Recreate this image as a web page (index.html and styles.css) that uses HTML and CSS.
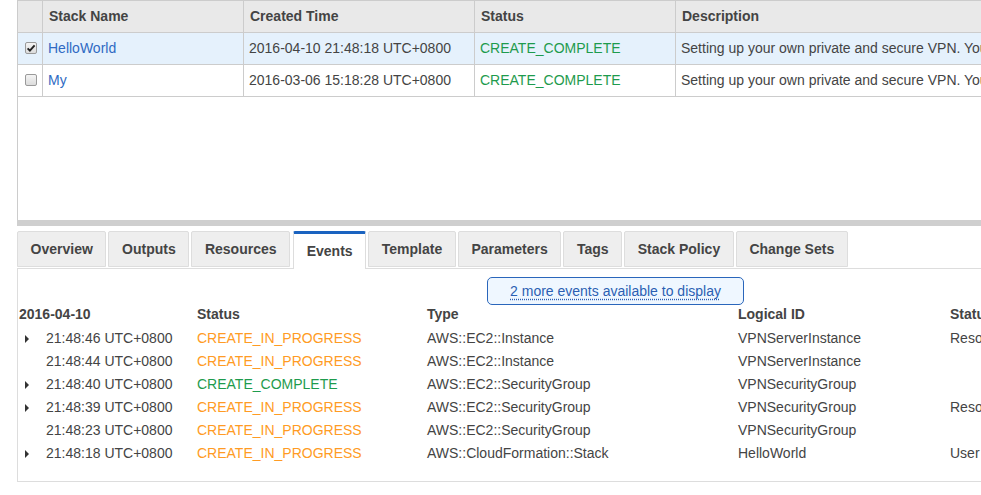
FILE: index.html
```html
<!DOCTYPE html>
<html lang="en">
<head>
<meta charset="utf-8">
<title>CloudFormation Stacks</title>
<link rel="stylesheet" href="styles.css">
</head>
<body>
<div class="page">
  <div class="top-pane">
    <table class="stacks">
      <thead>
        <tr>
          <th class="c-sel"></th>
          <th class="c-name">Stack Name</th>
          <th class="c-time">Created Time</th>
          <th class="c-status">Status</th>
          <th class="c-desc">Description</th>
        </tr>
      </thead>
      <tbody>
        <tr class="selected">
          <td class="c-sel"><span class="cb checked"><svg viewBox="0 0 12 12" width="12" height="12"><path d="M2.6 6.3 L4.9 8.6 L9.6 3.3" fill="none" stroke="#222" stroke-width="1.9"/></svg></span></td>
          <td><a class="link" href="#">HelloWorld</a></td>
          <td>2016-04-10 21:48:18 UTC+0800</td>
          <td class="ok">CREATE_COMPLETE</td>
          <td>Setting up your own private and secure VPN. You can use it to access the internet securely.</td>
        </tr>
        <tr>
          <td class="c-sel"><span class="cb"></span></td>
          <td><a class="link" href="#">My</a></td>
          <td>2016-03-06 15:18:28 UTC+0800</td>
          <td class="ok">CREATE_COMPLETE</td>
          <td>Setting up your own private and secure VPN. You can use it to access the internet securely.</td>
        </tr>
      </tbody>
    </table>
  </div>
  <div class="splitter"></div>
  <div class="tabs">
    <div class="tab">Overview</div>
    <div class="tab">Outputs</div>
    <div class="tab">Resources</div>
    <div class="tab active">Events</div>
    <div class="tab">Template</div>
    <div class="tab">Parameters</div>
    <div class="tab">Tags</div>
    <div class="tab">Stack Policy</div>
    <div class="tab">Change Sets</div>
  </div>
  <div class="panel">
    <div class="more-row"><button class="more" type="button"><span>2 more events available to display</span></button></div>
    <div class="events">
      <div class="eh">2016-04-10</div><div class="eh">Status</div><div class="eh">Type</div><div class="eh">Logical ID</div><div class="eh">Status Reason</div>

      <div class="ec t"><span class="caret"></span>21:48:46 UTC+0800</div><div class="ec prog">CREATE_IN_PROGRESS</div><div class="ec">AWS::EC2::Instance</div><div class="ec">VPNServerInstance</div><div class="ec">Resource creation Initiated</div>

      <div class="ec t"><span class="caret none"></span>21:48:44 UTC+0800</div><div class="ec prog">CREATE_IN_PROGRESS</div><div class="ec">AWS::EC2::Instance</div><div class="ec">VPNServerInstance</div><div class="ec"></div>

      <div class="ec t"><span class="caret"></span>21:48:40 UTC+0800</div><div class="ec ok">CREATE_COMPLETE</div><div class="ec">AWS::EC2::SecurityGroup</div><div class="ec">VPNSecurityGroup</div><div class="ec"></div>

      <div class="ec t"><span class="caret"></span>21:48:39 UTC+0800</div><div class="ec prog">CREATE_IN_PROGRESS</div><div class="ec">AWS::EC2::SecurityGroup</div><div class="ec">VPNSecurityGroup</div><div class="ec">Resource creation Initiated</div>

      <div class="ec t"><span class="caret none"></span>21:48:23 UTC+0800</div><div class="ec prog">CREATE_IN_PROGRESS</div><div class="ec">AWS::EC2::SecurityGroup</div><div class="ec">VPNSecurityGroup</div><div class="ec"></div>

      <div class="ec t"><span class="caret"></span>21:48:18 UTC+0800</div><div class="ec prog">CREATE_IN_PROGRESS</div><div class="ec">AWS::CloudFormation::Stack</div><div class="ec">HelloWorld</div><div class="ec">User Initiated</div>
    </div>
  </div>
</div>
</body>
</html>
```

FILE: styles.css
```css
html, body {
  margin: 0;
  padding: 0;
  background: #fff;
  overflow: hidden;
}
body {
  font-family: "Liberation Sans", Arial, sans-serif;
  font-size: 14px;
  color: #444;
}
.page {
  width: 1196px;
  margin-left: 17px;
}

/* top stack list */
.top-pane {
  height: 220px;
  border-left: 1px solid #ccc;
  box-sizing: border-box;
  overflow: hidden;
}
.stacks {
  border-collapse: separate;
  border-spacing: 0;
  table-layout: fixed;
  width: 1195px;
  border-top: 1px solid #ccc;
}
.stacks th, .stacks td {
  box-sizing: border-box;
  height: 32px;
  padding: 0 5px;
  border-right: 1px solid #ccc;
  border-bottom: 1px solid #ccc;
  text-align: left;
  white-space: nowrap;
  overflow: hidden;
  line-height: 31px;
}
.stacks th {
  background: #e9e9e9;
  font-weight: bold;
  color: #444;
  padding-left: 6px;
}
.stacks .c-sel { width: 25px; padding: 0 0 0 7px; }
.stacks .c-name { width: 201px; }
.stacks .c-time { width: 231px; }
.stacks .c-status { width: 201px; }
.stacks .c-desc { border-right: none; }
.stacks td:last-child { border-right: none; }
.stacks tr.selected td { background: #e5f1fc; }
.link { color: #2f6ac3; text-decoration: none; }
.ok { color: #1e9b4d; }
.prog { color: #ff9b24; }

.cb {
  display: inline-block;
  vertical-align: middle;
  width: 12px;
  height: 12px;
  border: 1px solid #9a9a9a;
  border-radius: 2px;
  background: linear-gradient(#f4f4f4, #dcdcdc);
  box-sizing: border-box;
  position: relative;
  top: -1px;
}
.cb svg {
  display: block;
  margin: -1px 0 0 -1px;
}

.splitter {
  height: 6px;
  background: #cfcfcf;
  margin-bottom: 5px;
}

/* tabs */
.tabs {
  display: flex;
  align-items: flex-start;
  gap: 2px;
  height: 37px;
  border-bottom: 1px solid #ddd;
}
.tab {
  box-sizing: border-box;
  height: 36px;
  line-height: 34px;
  padding: 0 12.6px;
  background: #eee;
  border: 1px solid #ddd;
  border-radius: 2px 2px 0 0;
  font-weight: bold;
  color: #444;
  white-space: nowrap;
}
.tab.active {
  height: 38px;
  background: #fff;
  border-top: 3px solid #1a63c0;
  border-bottom: none;
  line-height: 35px;
  margin-left: 1px;
}

/* panel */
.panel {
  border-left: 1px solid #ddd;
  border-bottom: 1px solid #ddd;
  padding-top: 8px;
  height: 213px;
  box-sizing: border-box;
}
.more-row {
  display: flex;
  justify-content: center;
}
.more {
  font: inherit;
  height: 28px;
  padding: 0 22px;
  background: #eff7ff;
  border: 1px solid #2a66bb;
  border-radius: 5px;
  color: #2b5fb3;
  cursor: pointer;
}
.more span {
  text-decoration: underline dotted #2b5fb3;
  text-underline-offset: 3px;
}

.events {
  display: grid;
  grid-template-columns: 178px 230px 311px 212px 250px;
  padding-left: 1px;
}
.eh {
  font-weight: bold;
  color: #444;
  height: 22px;
  line-height: 18px;
  white-space: nowrap;
}
.ec {
  height: 23px;
  line-height: 23px;
  white-space: nowrap;
}
.ec.t {
  display: flex;
  align-items: center;
}
.caret {
  width: 0;
  height: 0;
  margin-left: 6px;
  margin-right: 17px;
  border-top: 4px solid transparent;
  border-bottom: 4px solid transparent;
  border-left: 4px solid #333;
}
.caret.none { border-left-color: transparent; }
```
